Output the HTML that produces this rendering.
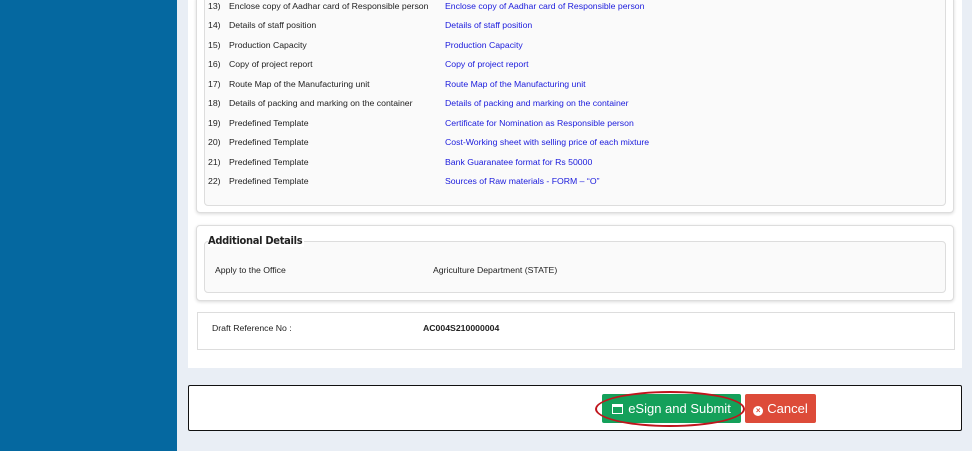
<!DOCTYPE html>
<html><head><style>
body{margin:0;width:972px;height:451px;overflow:hidden;background:#e9eef5;font-family:"Liberation Sans",sans-serif;position:relative}
.abs{position:absolute}
.side{left:0;top:0;width:177px;height:451px;background:#0568a0}
.panel{left:188px;top:0;width:774px;height:368px;background:#fff}
.card{background:#fff;border:1px solid #ddd;border-radius:4px;box-shadow:0 1px 3px rgba(0,0,0,.15)}
.inner{background:#fafafa;border:1px solid #ddd;border-radius:4px}
.row{position:absolute;font-size:8.7px;color:#222;white-space:nowrap}
.row .n{position:absolute;left:0}
.row .l{position:absolute;left:21px}
.row .r{position:absolute;left:237px;color:#1a1adc}
.btn{position:absolute;top:394px;height:29px;color:#fff;font-size:13px;line-height:29px;border-radius:2px;text-align:center;font-family:"Liberation Sans",sans-serif}
</style></head><body>
<div class="abs side"></div>
<div class="abs panel"></div>
<div class="abs card" style="left:196px;top:-5px;width:756px;height:216px"></div>
<div class="abs inner" style="left:204px;top:-5px;width:740px;height:209px"></div>
<div class="row" style="left:208px;top:1px"><span class="n">13)</span><span class="l">Enclose copy of Aadhar card of Responsible person</span><span class="r">Enclose copy of Aadhar card of Responsible person</span></div>
<div class="row" style="left:208px;top:20px"><span class="n">14)</span><span class="l">Details of staff position</span><span class="r">Details of staff position</span></div>
<div class="row" style="left:208px;top:40px"><span class="n">15)</span><span class="l">Production Capacity</span><span class="r">Production Capacity</span></div>
<div class="row" style="left:208px;top:59px"><span class="n">16)</span><span class="l">Copy of project report</span><span class="r">Copy of project report</span></div>
<div class="row" style="left:208px;top:79px"><span class="n">17)</span><span class="l">Route Map of the Manufacturing unit</span><span class="r">Route Map of the Manufacturing unit</span></div>
<div class="row" style="left:208px;top:98px"><span class="n">18)</span><span class="l">Details of packing and marking on the container</span><span class="r">Details of packing and marking on the container</span></div>
<div class="row" style="left:208px;top:118px"><span class="n">19)</span><span class="l">Predefined Template</span><span class="r">Certificate for Nomination as Responsible person</span></div>
<div class="row" style="left:208px;top:137px"><span class="n">20)</span><span class="l">Predefined Template</span><span class="r">Cost-Working sheet with selling price of each mixture</span></div>
<div class="row" style="left:208px;top:157px"><span class="n">21)</span><span class="l">Predefined Template</span><span class="r">Bank Guaranatee format for Rs 50000</span></div>
<div class="row" style="left:208px;top:176px"><span class="n">22)</span><span class="l">Predefined Template</span><span class="r">Sources of Raw materials - FORM – “O”</span></div>

<div class="abs card" style="left:196px;top:225px;width:756px;height:74px"></div>
<div class="abs inner" style="left:204px;top:241px;width:740px;height:50px"></div>
<div class="abs" style="left:208px;top:234px;font-size:11px;font-weight:bold;color:#222;background:#fff;padding-right:2px;font-family:'DejaVu Sans Condensed',sans-serif;letter-spacing:-0.3px">Additional Details</div>
<div class="row" style="left:215px;top:265px">Apply to the Office</div>
<div class="row" style="left:433px;top:265px">Agriculture Department (STATE)</div>

<div class="abs" style="left:197px;top:312px;width:756px;height:36px;border:1px solid #ddd;background:#fff"></div>
<div class="row" style="left:212px;top:323px">Draft Reference No :</div>
<div class="row" style="left:423px;top:323px;font-weight:bold">AC004S210000004</div>

<div class="abs" style="left:188px;top:385px;width:772px;height:44px;border:1px solid #111;border-radius:2px;background:#fff"></div>
<div class="btn" style="left:602px;width:139px;background:#14a05a"><span style="display:inline-block;width:11px;height:10px;border:1.5px solid #fff;box-sizing:border-box;border-top-width:3px;vertical-align:-1px;margin-right:5px"></span>eSign and Submit</div>
<div class="btn" style="left:745px;width:71px;background:#dd4b39"><span style="display:inline-block;width:10px;height:10px;border-radius:50%;background:#fff;color:#dd4b39;font-size:8px;line-height:10px;vertical-align:0;margin-right:4px;font-weight:bold">×</span>Cancel</div>
<div class="abs" style="left:595px;top:391px;width:146px;height:32px;border:2.5px solid #c0141c;border-radius:50%"></div>
</body></html>
